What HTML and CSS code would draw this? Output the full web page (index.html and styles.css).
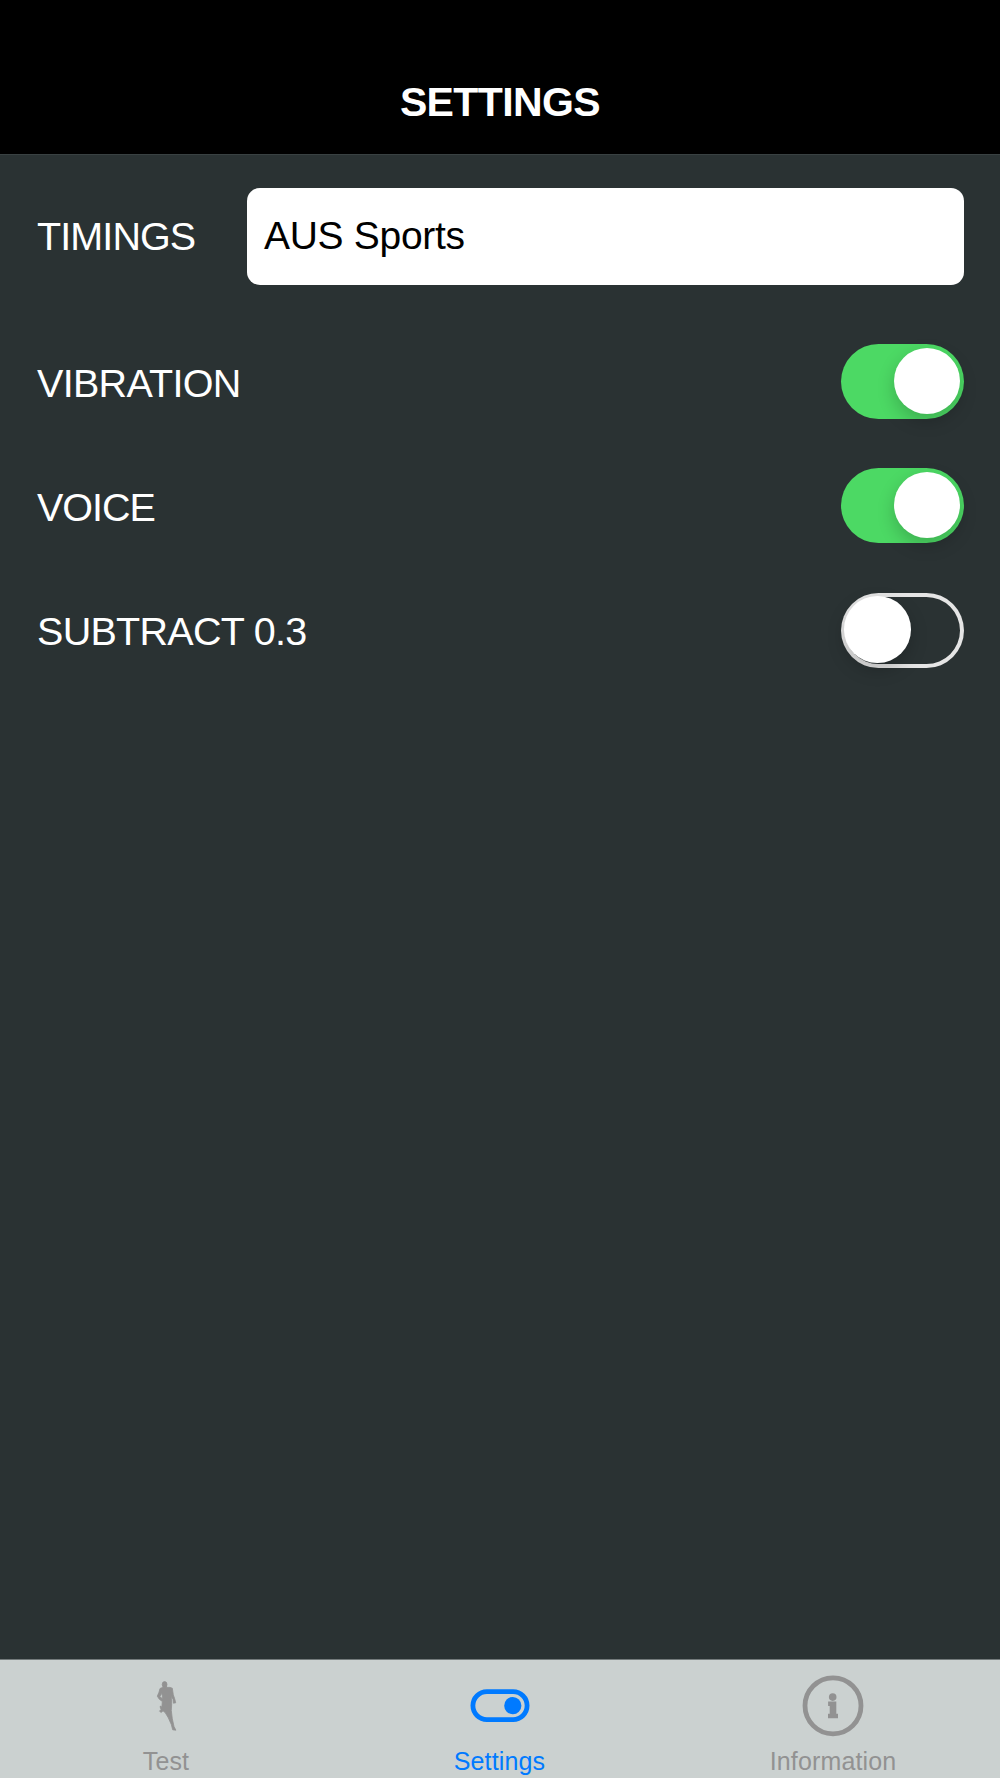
FILE: index.html
```
<!DOCTYPE html>
<html lang="en">
    <head>
        <meta charset="utf-8">
        <title>Settings</title>
        <link rel="stylesheet" href="styles.css">
    </head>
    <body>
        <header class="header">
            <h1>SETTINGS</h1>
        </header>
        <main class="settings">
            <div class="row timings">
                <span class="label timingsLabel">TIMINGS</span>
                <div class="field">AUS Sports</div>
            </div>
            <div class="row">
                <span class="label">VIBRATION</span>
                <div class="switch on"><div class="knob"></div></div>
            </div>
            <div class="row">
                <span class="label voiceLabel">VOICE</span>
                <div class="switch on"><div class="knob"></div></div>
            </div>
            <div class="row">
                <span class="label">SUBTRACT 0.3</span>
                <div class="switch"><div class="knob"></div></div>
            </div>
        </main>
        <nav class="tabBar">
            <div class="tab">
                <svg class="icon runner" viewBox="0 0 62 62">
                    <ellipse cx="29.6" cy="9.5" rx="2.4" ry="2.9"/>
                    <path fill-rule="evenodd" d="M28 12.2L25 13.5L24 17.2L22.3 21.2L24.3 24.2L27.3 26.5L27 30.2L26.7 33.2L26 31L25 31.5L26 34.5L24.5 36.2L26.3 37.5L28 35.8L30.3 37.8L33.3 42.8L36.3 49.5L37.7 54.8L40.9 55.2L39 51.5L37.3 43.8L36.3 35.5L36.7 28.8L36.3 21.5L38 24.2L38.4 28.2L40.7 27.8L39.7 23.8L38.3 19.8L37.3 13.2L35 12.4L32 12.4L31.3 11zM26.9 18.3L24.8 21.5L27.8 24z"/>
                </svg>
                <span>Test</span>
            </div>
            <div class="tab active">
                <svg class="icon" viewBox="0 0 62 62">
                    <rect class="outline" x="3.9" y="16.6" width="54.2" height="28" rx="14"/>
                    <circle cx="43.8" cy="30.7" r="8.6"/>
                </svg>
                <span>Settings</span>
            </div>
            <div class="tab">
                <svg class="icon" viewBox="0 0 62 62">
                    <circle class="outline" cx="31" cy="30.8" r="28"/>
                    <circle cx="30.7" cy="22.1" r="3.8"/>
                    <path d="M26.1 26.5h8.2v12.2h1.7v4.6h-10v-4.6h1.7v-7.8h-1.6z"/>
                </svg>
                <span>Information</span>
            </div>
        </nav>
    </body>
</html>
```
FILE: styles.css
```
* {
    box-sizing: border-box;
}
body {
    margin: 0;
    height: 1778px;
    display: flex;
    flex-direction: column;
    background-color: #2a3233;
    color: #fff;
    font-family: "Liberation Sans", Arial, sans-serif;
    overflow: hidden;
}
.header {
    height: 155px;
    padding-top: 78px;
    background-color: #000;
    border-bottom: 1px solid #394142;
    text-align: center;
}
h1 {
    margin: 0;
    font-size: 41px;
    line-height: 48px;
    letter-spacing: -0.6px;
}
.settings {
    flex: 1;
    padding: 33.4px 36.5px 0 37px;
}
.row {
    height: 124.3px;
    display: flex;
    align-items: center;
    justify-content: space-between;
}
.timings {
    height: 96.6px;
    margin-bottom: 34.5px;
}
.label {
    padding-top: 2px;
    font-size: 39.5px;
    line-height: 46px;
    letter-spacing: -0.7px;
    white-space: nowrap;
}
.timingsLabel {
    padding-top: 0;
    padding-bottom: 2px;
    letter-spacing: -0.9px;
}
.voiceLabel {
    letter-spacing: -1px;
}
.field {
    width: 717px;
    height: 96.6px;
    padding: 23.5px 17.5px;
    border-radius: 13px;
    background-color: #fff;
    color: #000;
    font-size: 39px;
    line-height: 48px;
    letter-spacing: -0.3px;
}
.switch {
    width: 123px;
    height: 75px;
    padding: 3.5px;
    border-radius: 38px;
    box-shadow: inset 0 0 0 4px #e5e5e5;
}
.knob {
    width: 66.5px;
    height: 66.5px;
    border-radius: 50%;
    background-color: #fff;
    box-shadow: 0 7px 18px rgba(0, 0, 0, 0.2);
}
.on {
    background-color: #4cd964;
    box-shadow: none;
}
.on .knob {
    margin-left: auto;
}
.tabBar {
    height: 119px;
    padding-right: 1px;
    display: flex;
    justify-content: center;
    gap: 13.5px;
    background-color: #cbd1d0;
    border-top: 1px solid #737a7b;
}
.tab {
    width: 320px;
    padding-top: 14.5px;
    display: flex;
    flex-direction: column;
    align-items: center;
    color: #929292;
    font-size: 25px;
    line-height: 28px;
    letter-spacing: 0.15px;
}
.active {
    color: #007aff;
}
.icon {
    width: 62px;
    height: 62px;
    margin-bottom: 10px;
    fill: currentColor;
}
.runner {
    stroke: currentColor;
    stroke-width: 0.8px;
    stroke-linejoin: round;
}
.outline {
    fill: none;
    stroke: currentColor;
    stroke-width: 4.8px;
}
```
